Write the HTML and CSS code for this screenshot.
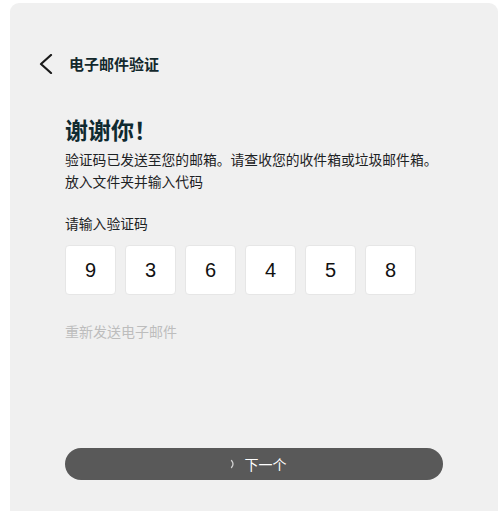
FILE: index.html
```html
<!DOCTYPE html>
<html lang="zh">
<head>
<meta charset="utf-8">
<title>电子邮件验证</title>
<link rel="stylesheet" href="styles.css">
</head>
<body>
<div class="card">
  <div class="header">
    <svg class="back" width="16" height="20" viewBox="0 0 16 20"><path d="M13 1 L3 10 L13 19" fill="none" stroke="#1a1a1a" stroke-width="2.2" stroke-linecap="round" stroke-linejoin="round"/></svg>
    <span class="header-title">电子邮件验证</span>
  </div>
  <div class="content">
    <h1 class="heading">谢谢你！</h1>
    <p class="desc">验证码已发送至您的邮箱。请查收您的收件箱或垃圾邮件箱。<br>放入文件夹并输入代码</p>
    <div class="label">请输入验证码</div>
    <div class="codes">
      <div class="code">9</div>
      <div class="code">3</div>
      <div class="code">6</div>
      <div class="code">4</div>
      <div class="code">5</div>
      <div class="code">8</div>
    </div>
    <div class="resend">重新发送电子邮件</div>
    <button class="next"><svg class="spin" width="6" height="10" viewBox="0 0 6 10"><path d="M1.5 1.5 Q4.5 5 1.5 8.5" fill="none" stroke="#cfcfcf" stroke-width="1.3" stroke-linecap="round"/></svg><span>下一个</span></button>
  </div>
</div>
</body>
</html>
```
FILE: styles.css
```css
html, body {
  margin: 0;
  padding: 0;
  background: #ffffff;
}
body {
  font-family: "Noto Sans CJK SC", "Noto Sans", sans-serif;
  overflow: hidden;
  height: 511px;
}
.card {
  margin: 3px 2px 0 10px;
  background: #f0f0f0;
  border-radius: 9px 9px 0 0;
  height: 520px;
  padding-top: 49px;
  box-sizing: border-box;
}
.header {
  display: flex;
  align-items: center;
  height: 24px;
  padding-left: 28px;
}
.back {
  display: block;
}
.header-title {
  margin-left: 15px;
  font-size: 15px;
  font-weight: 700;
  color: #13282c;
  line-height: 24px;
}
.content {
  padding-left: 55px;
  width: 378px;
}
.heading {
  margin: 38px 0 0 0;
  font-size: 23px;
  line-height: 30px;
  font-weight: 700;
  color: #0f2a30;
}
.desc {
  margin: 4px 0 0 0;
  font-size: 13.8px;
  line-height: 22px;
  color: #1d2224;
  white-space: nowrap;
}
.label {
  margin-top: 21px;
  font-size: 13.8px;
  line-height: 20px;
  color: #1d2224;
}
.codes {
  display: flex;
  gap: 9px;
  margin-top: 12px;
}
.code {
  width: 51px;
  height: 50px;
  box-sizing: border-box;
  background: #ffffff;
  border: 1px solid #e6e6e6;
  border-radius: 4px;
  display: flex;
  align-items: center;
  justify-content: center;
  font-family: "Liberation Sans", Arial, sans-serif;
  font-size: 20px;
  color: #111111;
}
.resend {
  margin-top: 26px;
  font-size: 14px;
  line-height: 20px;
  color: #bdbdbd;
}
.next {
  margin-top: 107px;
  width: 378px;
  height: 32px;
  border: none;
  border-radius: 16px;
  background: #595959;
  color: #ffffff;
  font-family: "Noto Sans CJK SC", "Noto Sans", sans-serif;
  font-size: 14px;
  display: flex;
  align-items: center;
  justify-content: center;
  padding: 0 0 0 8px;
}
.spin {
  display: block;
  margin-right: 9px;
}
```
